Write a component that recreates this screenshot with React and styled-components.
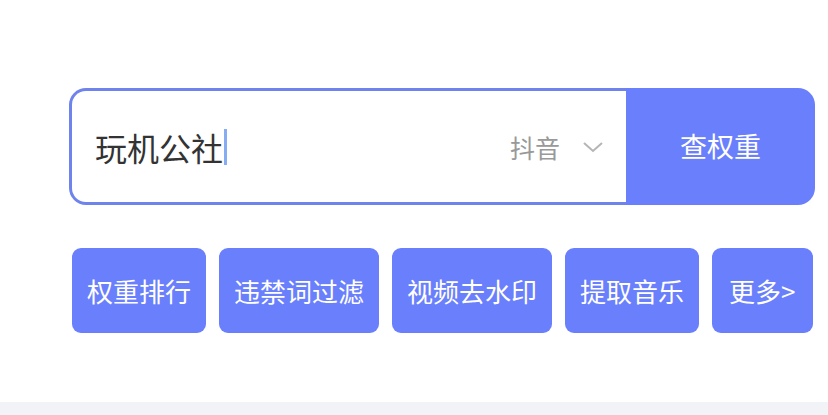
import React from 'react'
import styled, { createGlobalStyle } from 'styled-components'

const GlobalStyle = createGlobalStyle`
  html, body {
    margin: 0;
    padding: 0;
    background: #fff;
    font-family: "Noto Sans CJK SC", "Noto Sans", sans-serif;
  }
`

const Page = styled.div`
  width: 828px;
  height: 415px;
  display: flex;
  flex-direction: column;
  overflow: hidden;
`

const Main = styled.main`
  flex: 1;
  padding: 88px 13px 0 69px;
`

const SearchBar = styled.form`
  display: flex;
  height: 117px;
`

const InputBox = styled.div`
  flex: 1;
  display: flex;
  align-items: center;
  box-sizing: border-box;
  border: 3px solid #6f83ec;
  border-right: none;
  border-radius: 17px 0 0 17px;
  padding: 0 22px 0 23px;
  background: #fff;
`

const Query = styled.span`
  font-size: 32px;
  color: #333;
`

const Caret = styled.span`
  display: inline-block;
  width: 3px;
  height: 36px;
  margin-left: 1px;
  background: #86acf3;
`

const Spacer = styled.div`
  flex: 1;
`

const Platform = styled.button`
  display: flex;
  align-items: center;
  gap: 22px;
  border: none;
  background: none;
  padding: 0;
  font-family: inherit;
  font-size: 25px;
  color: #999;
`

const SubmitButton = styled.button`
  width: 189px;
  border: none;
  border-radius: 0 17px 17px 0;
  background: #6a7ffb;
  color: #fff;
  font-family: inherit;
  font-size: 27px;
  padding: 0 0 2px;
`

const Tools = styled.nav`
  display: flex;
  gap: 13px;
  margin-top: 43px;
  padding-left: 3px;
`

const ToolButton = styled.a`
  display: flex;
  align-items: center;
  height: 85px;
  padding: 0 ${(props) => (props.$more ? 17 : 15)}px;
  border-radius: 9px;
  background: #6a7ffb;
  color: #fff;
  font-size: 26px;
  text-decoration: none;
  white-space: nowrap;
`

const Footer = styled.div`
  height: 13px;
  background: #f2f3f6;
`

const tools = ['权重排行', '违禁词过滤', '视频去水印', '提取音乐', '更多>']

function Chevron() {
  return (
    <svg width="22" height="12" viewBox="0 0 22 12" fill="none">
      <polyline points="2,2 11,10 20,2" stroke="#b5b5b5" strokeWidth="2" />
    </svg>
  )
}

export default function App() {
  return (
    <Page>
      <GlobalStyle />
      <Main>
        <SearchBar onSubmit={(e) => e.preventDefault()}>
          <InputBox>
            <Query>玩机公社</Query>
            <Caret />
            <Spacer />
            <Platform type="button">
              抖音
              <Chevron />
            </Platform>
          </InputBox>
          <SubmitButton type="submit">查权重</SubmitButton>
        </SearchBar>
        <Tools>
          {tools.map((name) => (
            <ToolButton key={name} href="#" $more={name === '更多>'}>
              {name}
            </ToolButton>
          ))}
        </Tools>
      </Main>
      <Footer />
    </Page>
  )
}
